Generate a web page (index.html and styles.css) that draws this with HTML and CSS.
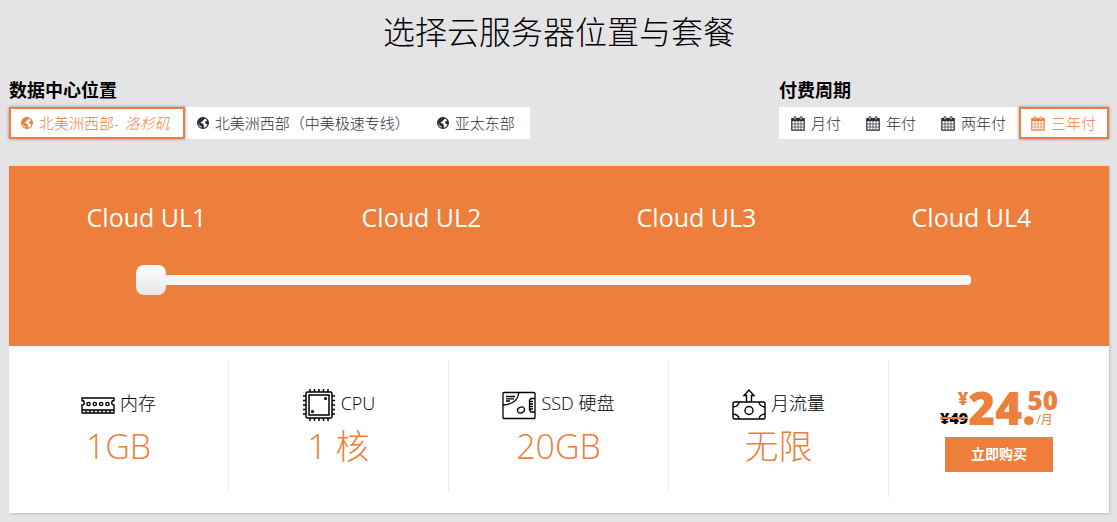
FILE: index.html
```html
<!DOCTYPE html>
<html lang="zh-CN">
<head>
  <meta charset="UTF-8" />
  <meta name="viewport" content="width=device-width, initial-scale=1.0"/>
  <title>选择云服务器位置与套餐</title>
  <link rel="stylesheet" href="styles.css">
</head>
<body>
  <!-- shared icons -->
  <svg class="sprite" aria-hidden="true">
    <symbol id="globe" viewBox="0 0 12 12">
      <circle cx="6" cy="6" r="5.4" fill="none" stroke="currentColor" stroke-width="1.2"/>
      <path d="M.4 6 1 3 3.400 .8 6 .2 7.400 1 7.800 2.200 6.400 3 5.600 4.200 4.200 5 3.600 5.800 5 6.200 6.400 7.600 7.400 8.400 6.600 9.600 7.200 11.400 4.800 11.600 4.400 9.600 2.800 8.400 1.600 7Z" fill="currentColor"/>
      <path d="M9.400 2 11 3.600 11.600 6 10.800 8.400 10 7.200 8.600 6.800 8 5.600 8.800 4.200 10 3.800Z" fill="currentColor"/>
    </symbol>
    <symbol id="calendar" viewBox="0 0 14 15">
      <path d="M.8 2.6H13.2V14.2H.8Z" fill="none" stroke="currentColor" stroke-width="1.2"/>
      <path d="M1 2.5H13V5.2H1Z" fill="currentColor"/>
      <path d="M1 8H13M1 11H13M4 5V14M7 5V14M10 5V14" fill="none" stroke="currentColor" stroke-width=".7"/>
      <rect x="3" y=".6" width="2" height="3.4" rx="1" fill="#fff" stroke="currentColor"/>
      <rect x="9" y=".6" width="2" height="3.4" rx="1" fill="#fff" stroke="currentColor"/>
    </symbol>
  </svg>

  <h1>选择云服务器位置与套餐</h1>

  <div class="options">
    <fieldset class="option-group locations">
      <legend>数据中心位置</legend>
      <div class="choices">
        <label class="choice"><input type="radio" name="location" checked><svg class="icon-globe"><use href="#globe"/></svg><span>北美洲西部- <em>洛杉矶</em></span></label>
        <label class="choice"><input type="radio" name="location"><svg class="icon-globe"><use href="#globe"/></svg><span>北美洲西部（中美极速专线）</span></label>
        <label class="choice"><input type="radio" name="location"><svg class="icon-globe"><use href="#globe"/></svg><span>亚太东部</span></label>
      </div>
    </fieldset>
    <fieldset class="option-group">
      <legend>付费周期</legend>
      <div class="choices">
        <label class="choice"><input type="radio" name="cycle"><svg class="icon-calendar"><use href="#calendar"/></svg><span>月付</span></label>
        <label class="choice"><input type="radio" name="cycle"><svg class="icon-calendar"><use href="#calendar"/></svg><span>年付</span></label>
        <label class="choice"><input type="radio" name="cycle"><svg class="icon-calendar"><use href="#calendar"/></svg><span>两年付</span></label>
        <label class="choice"><input type="radio" name="cycle" checked><svg class="icon-calendar"><use href="#calendar"/></svg><span>三年付</span></label>
      </div>
    </fieldset>
  </div>

  <div class="card">
    <div class="plans">
      <label class="plan-names" for="plan">
        <span>Cloud UL1</span>
        <span>Cloud UL2</span>
        <span>Cloud UL3</span>
        <span>Cloud UL4</span>
      </label>
      <div class="slider-row">
        <input class="slider" id="plan" type="range" min="1" max="4" value="1">
      </div>
    </div>

    <div class="specs">
      <div class="spec">
        <div class="spec-name">
          <svg class="icon-spec" viewBox="0 0 34 34" fill="none" stroke="#000" stroke-width="1.4">
            <path d="M1 10H33V12.5A2.2 2.2 0 0 0 33 17V25H1V17A2.2 2.2 0 0 0 1 12.5ZM1 22H33M5 22V25M9 22V25M13 22V25M17 22V25M21 22V25M25 22V25M29 22V25"/>
            <circle cx="7.5" cy="16" r="1.6"/><circle cx="13.8" cy="16" r="1.6"/><circle cx="20.2" cy="16" r="1.6"/><circle cx="26.5" cy="16" r="1.6"/>
          </svg>
          <span>内存</span>
        </div>
        <div class="spec-value">1GB</div>
      </div>
      <div class="spec">
        <div class="spec-name">
          <svg class="icon-spec" viewBox="0 0 34 34" fill="none" stroke="#000" stroke-width="1.5">
            <rect x="4" y="4" width="26" height="26" rx="1.5"/>
            <rect x="7" y="7" width="20" height="20"/>
            <path d="M8 1V4M12.5 1V4M17 1V4M21.5 1V4M26 1V4M8 30V33M12.5 30V33M17 30V33M21.5 30V33M26 30V33M1 8H4M1 12.5H4M1 17H4M1 21.5H4M1 26H4M30 8H33M30 12.5H33M30 17H33M30 21.5H33M30 26H33"/>
            <circle cx="23.5" cy="10.5" r=".8" fill="#000"/><circle cx="10.5" cy="23.5" r=".8" fill="#000"/>
          </svg>
          <span>CPU</span>
        </div>
        <div class="spec-value">1 核</div>
      </div>
      <div class="spec">
        <div class="spec-name">
          <svg class="icon-spec" viewBox="0 0 34 34" fill="none" stroke="#000" stroke-width="1.3">
            <rect x="1" y="4.5" width="32" height="26" rx="1"/>
            <path d="M17 4.5C16 11.5 11 16.5 1 17M4 8.5H13M4 10.8H12M4 13H8"/>
            <path d="M33 10.5H29L27.5 12V22L29 24H33M28 13.5H31M28 16H31M28 18.5H31M28 21H31"/>
            <ellipse cx="19" cy="22" rx="3.6" ry="2.8" transform="rotate(-25 19 22)"/>
          </svg>
          <span>SSD 硬盘</span>
        </div>
        <div class="spec-value">20GB</div>
      </div>
      <div class="spec">
        <div class="spec-name">
          <svg class="icon-spec" viewBox="0 0 34 34" fill="none" stroke="#000" stroke-width="1.4">
            <path d="M14.5 14H2.5Q1 14 1 15.5V29.5Q1 31 2.5 31H31.5Q33 31 33 29.5V15.5Q33 14 31.5 14H19.5M14.5 14V7.5H12L17 2 22 7.5H19.5V14Z"/>
            <path d="M7 14Q6.5 18.5 1 19M27 14Q27.5 18.5 33 19M1 26Q6.5 26.5 7 31M33 26Q27.5 26.5 27 31"/>
            <circle cx="17" cy="22.5" r="4"/>
          </svg>
          <span>月流量</span>
        </div>
        <div class="spec-value">无限</div>
      </div>
      <div class="buy">
        <div class="price">
          <div class="price-left">
            <span class="currency">¥</span>
            <del>¥49</del>
          </div>
          <span class="amount">24.</span>
          <div class="price-right">
            <span class="cents">50</span>
            <span class="period">/月</span>
          </div>
        </div>
        <button class="buy-btn" type="button">立即购买</button>
      </div>
    </div>
  </div>
</body>
</html>
```
FILE: styles.css
```css
* {
  box-sizing: border-box;
}

body {
  margin: 0;
  padding: 8px 8px 8px 9px;
  background: #e4e4e6;
  color: #000;
  font-family: "Open Sans", "Noto Sans CJK SC", sans-serif;
  font-weight: 300;
}

.sprite {
  display: none;
}

h1 {
  margin: 0;
  font-size: 32px;
  line-height: 48px;
  font-weight: 300;
  text-align: center;
}

.options {
  display: flex;
  justify-content: space-between;
  margin-top: 22px;
}

.option-group {
  margin: 0;
  padding: 0;
  border: 0;
}

legend {
  padding: 0;
  margin-bottom: 5px;
  font-size: 18px;
  line-height: 24px;
  font-weight: 700;
}

.choices {
  display: flex;
  background: #fff;
}

.choice {
  display: flex;
  align-items: center;
  gap: 6px;
  height: 32px;
  padding: 0 11px 0 10px;
  border: 2px solid transparent;
  color: #2b2f38;
  font-size: 15px;
  line-height: 22px;
  white-space: nowrap;
  cursor: pointer;
}

.locations .choice {
  padding-right: 13px;
}

.choice span {
  padding-bottom: 1px;
}

.choice em {
  margin-left: 2px;
}

.choice input {
  position: absolute;
  opacity: 0;
}

.choice:has(input:checked) {
  border-color: #ee7e3b;
  color: #ee7e3b;
  box-shadow: 0 0 3px #8a8a8a;
}

.icon-globe {
  width: 12px;
  height: 12px;
}

.icon-calendar {
  width: 14px;
  height: 15px;
}

.card {
  margin-top: 27px;
  background: #fff;
  box-shadow: 1px 1px 2px #b8babd;
}

.plans {
  height: 180px;
  padding-top: 33px;
  background: #ee7e3b;
}

.plan-names {
  display: grid;
  grid-template-columns: repeat(4, 1fr);
  color: #fff;
  font-size: 25px;
  line-height: 36px;
  font-weight: 400;
  text-align: center;
}

.slider-row {
  padding: 30px 138px 0 127px;
}

.slider {
  display: block;
  width: 100%;
  height: 30px;
  margin: 0;
  background: transparent;
  appearance: none;
}

.slider::-webkit-slider-runnable-track {
  height: 10px;
  border-radius: 4px;
  background: #f9f5f7;
}

.slider::-webkit-slider-thumb {
  width: 30px;
  height: 30px;
  margin-top: -10px;
  border-radius: 8px;
  background: linear-gradient(#fff, #e6e6e6);
  appearance: none;
}

.specs {
  display: grid;
  grid-template-columns: repeat(5, 1fr);
  padding: 14px 0 15px;
}

.spec {
  height: 132px;
  padding-top: 28px;
  border-right: 1px solid #ebebeb;
  text-align: center;
}

.spec:nth-child(4) {
  height: 138px;
}

.spec-name {
  display: flex;
  justify-content: center;
  align-items: center;
  gap: 5px;
  height: 34px;
  font-size: 18px;
  line-height: 24px;
}

.spec-name span {
  padding-bottom: 4px;
}

.icon-spec {
  width: 34px;
  height: 34px;
}

.spec-value {
  color: #ee7e3b;
  font-size: 34px;
  line-height: 48px;
}

.buy {
  display: flex;
  flex-direction: column;
  align-items: center;
  height: 138px;
  padding-top: 28px;
}

.price {
  display: flex;
  height: 40px;
  color: #ee7e3b;
  font-weight: 800;
}

.price-left,
.price-right {
  display: flex;
  flex-direction: column;
}

.price-left {
  align-items: flex-end;
}

.currency {
  font-size: 18px;
  line-height: 20px;
}

del {
  color: #000;
  font-size: 16px;
  line-height: 20px;
  text-decoration: line-through #ee7e3b 2px;
}

.amount {
  font-size: 46px;
  line-height: 38px;
}

.price-right {
  margin-left: -8px;
}

.cents {
  font-size: 26px;
  line-height: 24px;
}

.period {
  padding-left: 9px;
  font-size: 12px;
  line-height: 16px;
  font-weight: 400;
}

.buy-btn {
  width: 108px;
  height: 35px;
  margin-top: 9px;
  padding: 0 0 4px;
  border: 0;
  background: #ee7e3b;
  color: #fff;
  font-family: "Open Sans", "Noto Sans CJK SC", sans-serif;
  font-size: 14px;
  font-weight: 700;
  cursor: pointer;
}
```
